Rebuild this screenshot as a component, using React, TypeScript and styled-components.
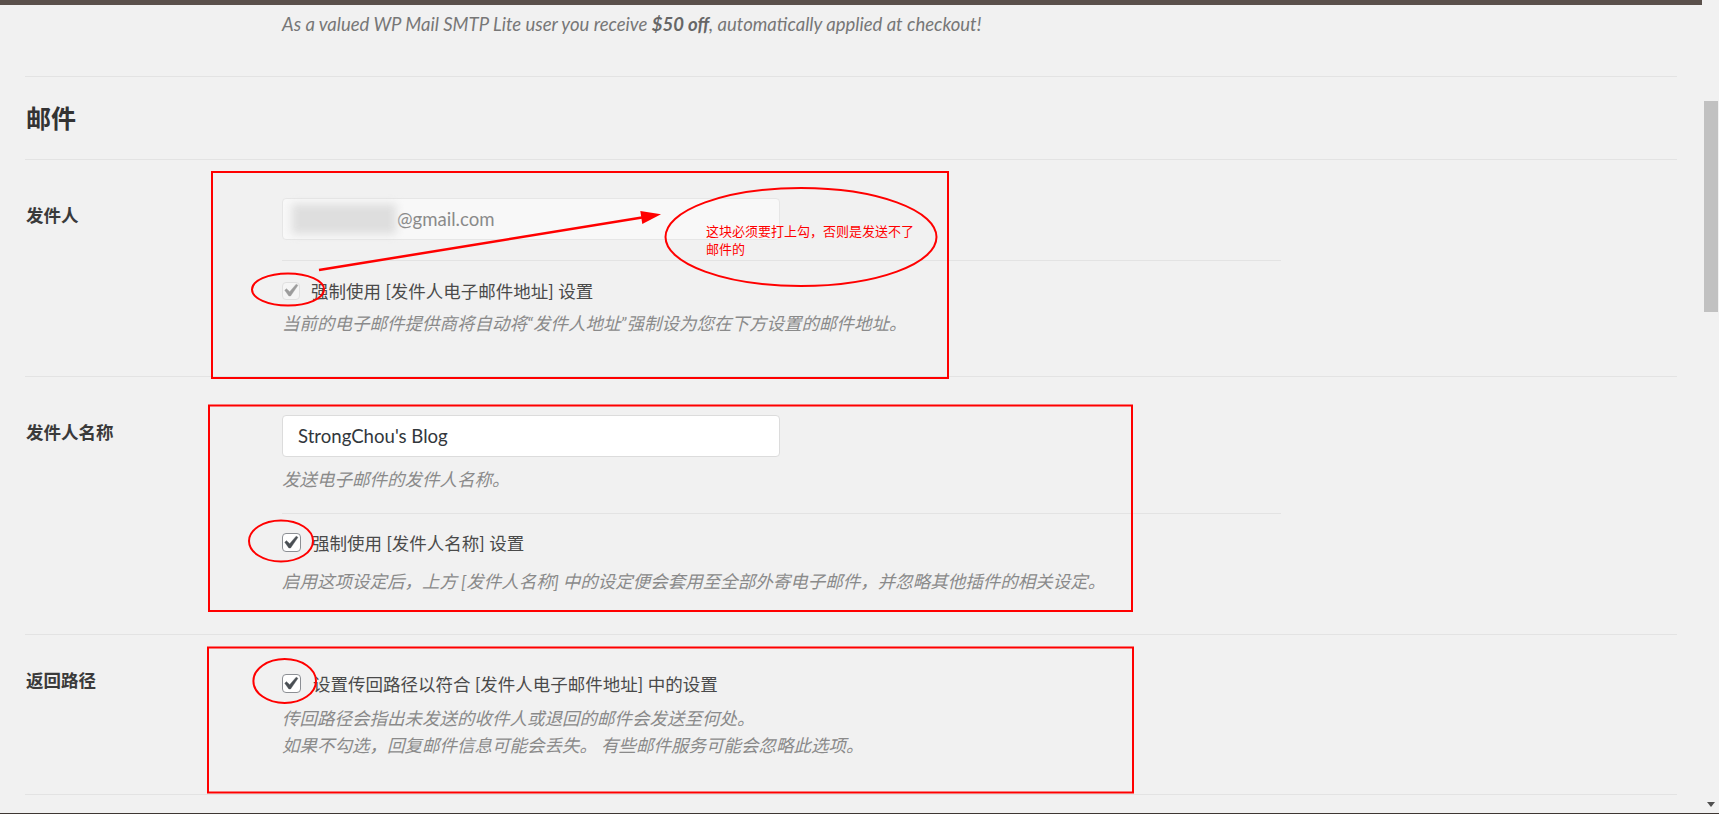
import React from "react";
import styled, { createGlobalStyle } from "styled-components";

const FONT = `"Lato", "Noto Sans CJK SC", sans-serif`;

const GlobalStyle = createGlobalStyle`
  html, body { margin: 0; padding: 0; background: #f1f1f1; overflow: hidden; }
  body { font-family: ${FONT}; color: #444; }
  * { box-sizing: border-box; }
`;

const Screen = styled.div`
  width: 1719px;
  height: 814px;
  display: flex;
  flex-direction: column;
  background: #f1f1f1;
  overflow: hidden;
`;

const Main = styled.div`
  flex: 1;
  display: flex;
  min-height: 0;
`;

const Page = styled.div`
  position: relative;
  width: 1702px;
  flex: none;
  display: flex;
  flex-direction: column;
`;

const TopBar = styled.div`
  height: 5px;
  flex: none;
  background: #5a504b;
`;

const Content = styled.div`
  padding: 0 25px;
  display: flex;
  flex-direction: column;
`;

const Row = styled.div`
  display: flex;
  align-items: flex-start;
  border-bottom: 1px solid #e3e3e3;
`;

const LabelCell = styled.div<{ $pt: number }>`
  width: 257px;
  flex: none;
  padding-top: ${(p) => p.$pt}px;
  padding-left: 1px;
  font-size: 17.5px;
  line-height: 27px;
  font-weight: 700;
  color: #3a3a3a;
`;

const Field = styled.div<{ $pt: number; $pb: number }>`
  flex: 1;
  display: flex;
  flex-direction: column;
  align-items: flex-start;
  padding: ${(p) => p.$pt}px 0 ${(p) => p.$pb}px;
`;

const Promo = styled.p`
  margin: 0;
  font-size: 18.5px;
  line-height: 27px;
  font-style: italic;
  color: #777;
  strong { font-weight: 700; color: #666; }
`;

const Heading = styled.h2`
  margin: 0;
  padding: 25px 0 25px 1px;
  font-size: 25px;
  line-height: 32px;
  font-weight: 700;
  color: #333;
`;

const TextInput = styled.div<{ $disabled?: boolean }>`
  width: 498px;
  height: 42px;
  display: flex;
  align-items: center;
  padding: 0 15px;
  border-radius: 4px;
  border: 1px solid ${(p) => (p.$disabled ? "#e6e6e6" : "#dcdcdc")};
  background: ${(p) => (p.$disabled ? "#f8f8f8" : "#ffffff")};
  color: ${(p) => (p.$disabled ? "#8a8a8a" : "#32373c")};
  font-size: 18.6px;
  white-space: nowrap;
`;

const Redacted = styled.span`
  display: inline-block;
  width: 104px;
  height: 30px;
  margin-left: -6px;
  margin-right: 1px;
  background: #dedede;
  filter: blur(4px);
`;

const Divider = styled.div`
  width: 999px;
  height: 1px;
  background: #e3e3e3;
  margin-top: 20px;
`;

const CheckRow = styled.div<{ $mt: number; $gap: number }>`
  display: flex;
  align-items: center;
  gap: ${(p) => p.$gap}px;
  margin-top: ${(p) => p.$mt}px;
  height: 27px;
  font-size: 17.5px;
  color: #4a4a4a;
`;

const Box = styled.span<{ $disabled?: boolean }>`
  width: ${(p) => (p.$disabled ? 18 : 19)}px;
  height: ${(p) => (p.$disabled ? 18 : 19)}px;
  flex: none;
  display: flex;
  align-items: center;
  justify-content: center;
  border-radius: 4px;
  border: 1px solid ${(p) => (p.$disabled ? "#e0e0e0" : "#8c8f94")};
  background: ${(p) => (p.$disabled ? "#f5f5f5" : "#ffffff")};
  color: ${(p) => (p.$disabled ? "#9c9c9c" : "#4a4f54")};
  svg { display: block; flex: none; }
`;

const Desc = styled.p<{ $mt: number }>`
  margin: ${(p) => p.$mt}px 0 0;
  font-size: 17.5px;
  line-height: 27px;
  font-style: italic;
  color: #8a8a8a;
`;

const Overlay = styled.svg`
  position: absolute;
  left: 0;
  top: 0;
  pointer-events: none;
`;

const Note = styled.div`
  position: absolute;
  left: 706px;
  top: 222px;
  font-family: "Noto Sans CJK SC", sans-serif;
  font-size: 13px;
  line-height: 18px;
  color: #ff0000;
  white-space: nowrap;
  pointer-events: none;
`;

const Track = styled.div`
  width: 17px;
  flex: none;
  display: flex;
  flex-direction: column;
  align-items: flex-start;
  padding-top: 101px;
  background: #f1f1f1;
`;

const Thumb = styled.div`
  width: 14px;
  height: 211px;
  margin-left: 2px;
  background: #c1c1c1;
`;

const ArrowDown = styled.svg`
  margin-top: auto;
  margin-left: 5px;
  margin-bottom: 6px;
`;

const BottomStrip = styled.div`
  height: 1px;
  flex: none;
  background: #3e3733;
`;

const Check = () => (
  <svg width="19" height="19" viewBox="3.6 2.4 15 15">
    <path
      fill="currentColor"
      stroke="currentColor"
      strokeWidth="0.35"
      strokeLinejoin="round"
      d="M14.83 4.89l1.34.94-5.81 8.38H9.02L5.78 9.67l1.34-1.25 2.57 2.4z"
    />
  </svg>
);

const CheckBox = ({ disabled }: { disabled?: boolean }) => (
  <Box $disabled={disabled} role="checkbox" aria-checked="true">
    <Check />
  </Box>
);

const Annotations = () => (
  <>
    <Overlay width="1702" height="814" viewBox="0 0 1702 814">
      <g fill="none" stroke="#ff0000" strokeWidth="2">
        <rect x="212" y="172" width="736" height="206" />
        <rect x="209" y="405.5" width="923" height="205.5" />
        <rect x="208" y="647.5" width="925" height="145" />
        <ellipse cx="801" cy="237" rx="135.5" ry="49" />
        <ellipse cx="288" cy="289.5" rx="36" ry="16" />
        <ellipse cx="281" cy="541" rx="32" ry="20.5" />
        <ellipse cx="284.7" cy="681" rx="31.3" ry="22" />
        <line x1="319" y1="270" x2="642" y2="217.6" strokeWidth="2.5" />
      </g>
      <polygon points="661,214.3 640.3,211.1 642.3,223.9" fill="#ff0000" />
    </Overlay>
    <Note>
      这块必须要打上勾，否则是发送不了
      <br />
      邮件的
    </Note>
  </>
);

export default function App() {
  return (
    <>
      <GlobalStyle />
      <Screen>
        <Main>
          <Page>
            <TopBar />
            <Content>
              <Row>
                <LabelCell $pt={0} />
                <Field $pt={6} $pb={38}>
                  <Promo>
                    As a valued WP Mail SMTP Lite user you receive <strong>$50 off</strong>, automatically
                    applied at checkout!
                  </Promo>
                </Field>
              </Row>

              <Row>
                <Heading>邮件</Heading>
              </Row>

              <Row>
                <LabelCell $pt={42}>发件人</LabelCell>
                <Field $pt={38} $pb={39}>
                  <TextInput $disabled>
                    <Redacted />
                    @gmail.com
                  </TextInput>
                  <Divider />
                  <CheckRow $mt={16} $gap={11}>
                    <CheckBox disabled />
                    强制使用 [发件人电子邮件地址] 设置
                  </CheckRow>
                  <Desc $mt={6}>当前的电子邮件提供商将自动将“发件人地址”强制设为您在下方设置的邮件地址。</Desc>
                </Field>
              </Row>

              <Row>
                <LabelCell $pt={42}>发件人名称</LabelCell>
                <Field $pt={38} $pb={39}>
                  <TextInput>StrongChou's Blog</TextInput>
                  <Desc $mt={9}>发送电子邮件的发件人名称。</Desc>
                  <Divider />
                  <CheckRow $mt={15} $gap={11}>
                    <CheckBox />
                    强制使用 [发件人名称] 设置
                  </CheckRow>
                  <Desc $mt={12}>
                    启用这项设定后，上方 [发件人名称] 中的设定便会套用至全部外寄电子邮件，并忽略其他插件的相关设定。
                  </Desc>
                </Field>
              </Row>

              <Row>
                <LabelCell $pt={32}>返回路径</LabelCell>
                <Field $pt={35} $pb={35}>
                  <CheckRow $mt={0} $gap={12}>
                    <CheckBox />
                    设置传回路径以符合 [发件人电子邮件地址] 中的设置
                  </CheckRow>
                  <Desc $mt={8}>
                    传回路径会指出未发送的收件人或退回的邮件会发送至何处。
                    <br />
                    如果不勾选，回复邮件信息可能会丢失。 有些邮件服务可能会忽略此选项。
                  </Desc>
                </Field>
              </Row>
            </Content>
            <Annotations />
          </Page>
          <Track>
            <Thumb />
            <ArrowDown width="8" height="5" viewBox="0 0 8 5">
              <polygon points="0,0 8,0 4,5" fill="#505050" />
            </ArrowDown>
          </Track>
        </Main>
        <BottomStrip />
      </Screen>
    </>
  );
}
